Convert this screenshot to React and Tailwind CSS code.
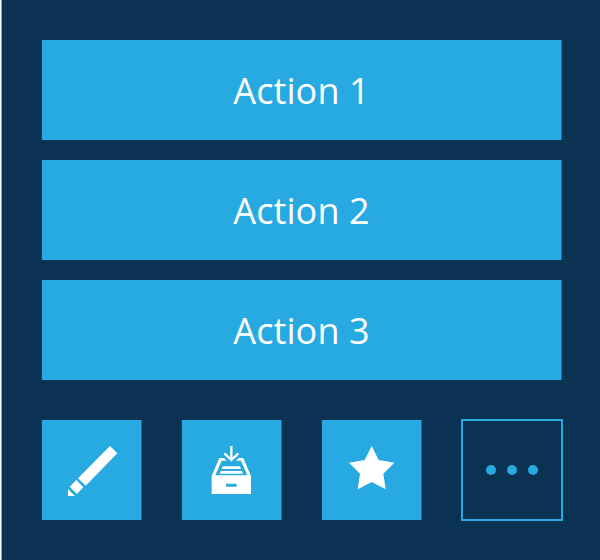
const actions = ["Action 1", "Action 2", "Action 3"];

function Tile({ label, children }) {
  return (
    <button aria-label={label} className="h-[100px] w-[101px] border-x border-l-[#104067] border-r-[#1a709f] bg-[#27aae2]">
      <svg viewBox="18 18 300 300" className="block size-[100px]" fill="#fff">
        {children}
      </svg>
    </button>
  );
}

export default function App() {
  return (
    <main className="h-[560px] w-[600px] overflow-hidden border-l border-white bg-[#0b3252] font-['Open_Sans',sans-serif]">
      <div className="h-full border-l border-[#8c9fae] pt-10 pl-[39px]">
        <div className="flex w-[521px] flex-col gap-5">
          {actions.map((a) => (
            <button key={a} className="h-[100px] border-x border-l-[#104067] border-r-[#1a709f] bg-[#27aae2] pt-px text-[36px] leading-none tracking-[0.1px] text-white">
              {a}
            </button>
          ))}
        </div>
        <div className="mt-10 flex gap-[39px]">
          <Tile label="Edit">
            <path d="M222 96L244 118L149 215L126 193ZM121 198L142 220L123 240L101 218ZM96 225L117 246H96Z" />
          </Tile>
          <Tile label="Archive">
            <path fillRule="evenodd" d="M107 186L130 132H144L152 140H137L118 184H214L195 140H180L188 132H202L225 186V240H107ZM150 209V218H182V209Z" />
            <path d="M140 157H192L195 165H137ZM134 171H198L201 179H131Z" />
            <path d="M166 96V138M145 118L166 138L187 118" fill="none" stroke="#fff" strokeWidth="7" />
          </Tile>
          <Tile label="Favorite">
            <path d="M167 96L188 138L235 146L202 179L209 226L167 204L125 226L132 179L99 146L146 138Z" />
          </Tile>
          <button aria-label="More" className="-mt-px flex size-[102px] items-center justify-center gap-[11px] border-2 border-[#27aae2]">
            <span className="size-2.5 rounded-full bg-[#27aae2]" />
            <span className="size-2.5 rounded-full bg-[#27aae2]" />
            <span className="size-2.5 rounded-full bg-[#27aae2]" />
          </button>
        </div>
      </div>
    </main>
  );
}
